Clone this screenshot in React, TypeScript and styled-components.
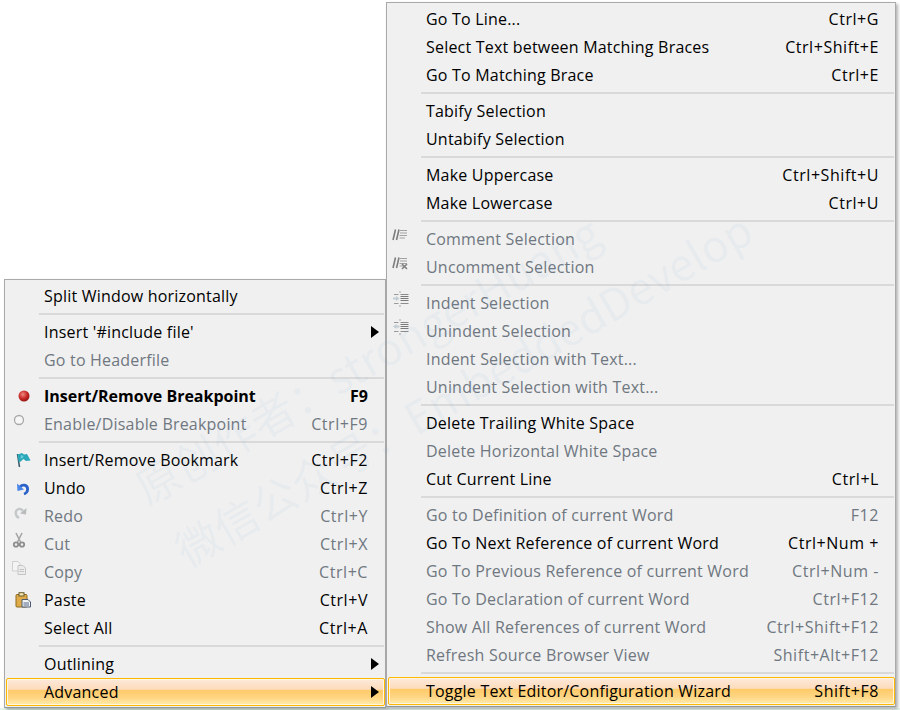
import { ReactNode } from "react";
import styled, { createGlobalStyle } from "styled-components";

const GlobalStyle = createGlobalStyle`
    html, body {
        margin: 0;
        padding: 0;
        background: #ffffff;
    }
`;

const Page = styled.div`
    position: relative;
    width: 900px;
    height: 710px;
    overflow: hidden;
    display: flex;
    align-items: flex-end;
    padding: 0 4px 2px 4px;
    box-sizing: border-box;
    background: linear-gradient(to top, #e6f4ec 2px, #ffffff 2px);
    font-family: "Open Sans", "Noto Sans", sans-serif;
    font-size: 16px;
    letter-spacing: 0.2px;
    color: #000000;
`;

const Menu = styled.div<{ $width: number; $lift?: number }>`
    width: ${p => p.$width}px;
    margin-bottom: ${p => p.$lift ?? 0}px;
    box-sizing: border-box;
    background: #f0f0f0;
    border: 1px solid #a9a9a9;
    border-bottom-color: #8f9a94;
    box-shadow: 2px 2px 3px rgba(0, 0, 0, 0.3);
    padding: 2px 0 1px 1px;
    display: flex;
    flex-direction: column;
`;

const Row = styled.div<{ $disabled?: boolean; $active?: boolean; $bold?: boolean; $tail: number }>`
    height: 28px;
    box-sizing: border-box;
    display: grid;
    grid-template-columns: 38px 1fr auto ${p => p.$tail}px;
    align-items: center;
    color: ${p => (p.$disabled ? "#6f7780" : "#000000")};
    font-weight: ${p => (p.$bold ? 700 : 400)};
    letter-spacing: ${p => (p.$bold ? "0" : "0.2px")};
    border-radius: 2px;
    ${p => p.$active && `
        border: 1px solid #ffb700;
        box-shadow: inset 0 0 0 1px #fff6e2;
        background: linear-gradient(#fde9da 0%, #fddcbc 40%, #ffca68 42%, #ffd583 72%, #ffecae 100%);
        grid-template-columns: 37px 1fr auto ${p.$tail - 1}px;
    `}
`;

const IconSlot = styled.div<{ $lift?: number; $left: number }>`
    display: flex;
    align-items: center;
    padding-left: ${p => p.$left}px;
    padding-bottom: ${p => p.$lift ?? 0}px;
`;

const Label = styled.span`
    white-space: nowrap;
`;

const Shortcut = styled.span<{ $bold?: boolean }>`
    white-space: nowrap;
    text-align: right;
    letter-spacing: ${p => (p.$bold ? "0" : "0.55px")};
`;

const Arrow = styled.div<{ $active?: boolean }>`
    width: 0;
    height: 0;
    border-left: 8px solid #000000;
    border-top: 6.5px solid transparent;
    border-bottom: 6.5px solid transparent;
    justify-self: end;
    margin-right: ${p => (p.$active ? 5 : 6)}px;
`;

const Separator = styled.div`
    height: 2px;
    margin: 3px 1px 3px 33px;
    background: #d9d9d9;
`;

const Watermark = styled.div<{ $x: number; $y: number }>`
    position: absolute;
    left: ${p => p.$x}px;
    top: ${p => p.$y}px;
    font-family: "Noto Sans CJK SC", "Open Sans", sans-serif;
    font-size: 44px;
    letter-spacing: 0;
    color: rgba(110, 160, 215, 0.07);
    white-space: nowrap;
    transform: rotate(-30deg);
    transform-origin: 0 50%;
    pointer-events: none;
`;

const BreakpointIcon = () => (
    <svg width="14" height="14" viewBox="0 0 14 14">
        <defs>
            <radialGradient id="bp" cx="40%" cy="35%" r="70%">
                <stop offset="0%" stopColor="#ee8a80" />
                <stop offset="55%" stopColor="#c92a26" />
                <stop offset="100%" stopColor="#8e1512" />
            </radialGradient>
        </defs>
        <circle cx="7" cy="7" r="5.5" fill="url(#bp)" />
    </svg>
);

const EmptyBreakpointIcon = () => (
    <svg width="14" height="14" viewBox="0 0 14 14">
        <circle cx="7" cy="7" r="4.5" fill="#f6f6f6" stroke="#a8a8a8" strokeWidth="1.3" />
    </svg>
);

const BookmarkIcon = () => (
    <svg width="16" height="16" viewBox="0 0 16 16">
        <path d="M2.5 2 L4.5 15" stroke="#3b5f6e" strokeWidth="1.6" fill="none" />
        <path d="M2.5 2.5 L7 1 L9 2.5 L12 2 L15.5 8.5 L11 9 L8.5 7 L5 10 L3.5 9 Z" fill="#2aa7b8" />
        <path d="M6 3 L8.5 4 L8 6 L5.5 6.5 Z" fill="#66cdd8" />
    </svg>
);

const UndoIcon = () => (
    <svg width="16" height="16" viewBox="0 0 16 16">
        <path d="M9 14 C13.5 12.5 14 6.5 9.5 5.2 C7.5 4.8 6 5.8 5 7" stroke="#2a62c9" strokeWidth="2.8" fill="none" />
        <path d="M2 3.5 L2.5 11 L9 9.5 Z" fill="#4a86e8" />
    </svg>
);

const RedoIcon = () => (
    <svg width="16" height="16" viewBox="0 0 16 16">
        <path d="M7 14 C3 12 2.5 6.5 6.5 5 C8.5 4.5 10 5.5 11 7" stroke="#c4c8c8" strokeWidth="2.4" fill="none" />
        <path d="M14.5 4 L14 10.5 L8 9.5 Z" fill="#b8bcbc" />
    </svg>
);

const CutIcon = () => (
    <svg width="16" height="16" viewBox="0 0 16 16">
        <path d="M5 1 L9.5 10 M11 1 L6.5 10" stroke="#a5a5a5" strokeWidth="1.6" fill="none" />
        <circle cx="5" cy="12.5" r="2.2" fill="none" stroke="#8d8d8d" strokeWidth="1.8" />
        <circle cx="11" cy="12.5" r="2.2" fill="none" stroke="#8d8d8d" strokeWidth="1.8" />
    </svg>
);

const CopyIcon = () => (
    <svg width="16" height="16" viewBox="0 0 16 16">
        <path d="M1.5 1.5 H7 L9 3.5 V11 H1.5 Z" fill="#f4f4f4" stroke="#cfcfcf" />
        <path d="M7 5.5 H12 L14.5 8 V14.5 H7 Z" fill="#ececec" stroke="#c4c4c4" />
        <path d="M8.5 9.5 H13 M8.5 11.5 H13" stroke="#c4c4c4" />
    </svg>
);

const PasteIcon = () => (
    <svg width="17" height="16" viewBox="0 0 17 16">
        <rect x="1" y="2.5" width="11" height="12.5" rx="1" fill="#e0ac4a" stroke="#8e6a22" />
        <rect x="4" y="0.7" width="5" height="3.3" fill="#f4e7b5" stroke="#6a5a2a" />
        <path d="M7 7.5 H13 L15.5 10 V15 H7 Z" fill="#f2f2f2" stroke="#4a5a72" />
        <path d="M8.5 11 H14 M8.5 13 H14" stroke="#536a8c" />
    </svg>
);

const CommentIcon = ({ cross }: { cross?: boolean }) => (
    <svg width="16" height="14" viewBox="0 0 16 14">
        <path d="M3.5 1.5 L1 12 M7 1.5 L4.5 12" stroke="#7d7d7d" strokeWidth="1.6" fill="none" />
        <path d="M8 2.5 H15 M8 5 H15 M7.5 7.5 H15 M7.5 10 H13" stroke="#a2a2a2" />
        {cross && <path d="M10 8 L15 13 M15 8 L10 13" stroke="#808080" strokeWidth="1.6" />}
    </svg>
);

const IndentIcon = ({ back }: { back?: boolean }) => (
    <svg width="17" height="18" viewBox="0 0 17 18">
        <path d="M8 1 V3 M8 15 V17" stroke="#a8a8a8" />
        <path d="M2 4.5 H6.5 M2 13.5 H6.5" stroke="#9a9a9a" />
        <path d="M8.5 4.5 H16.5 M8.5 13.5 H16.5" stroke="#8c8c8c" />
        <path d="M8.5 6.5 H16.5 M8.5 8.5 H16.5 M8.5 10.5 H16.5" stroke="#7a7a7a" strokeWidth="1.2" />
        {back ? (
            <path d="M1 8.5 L4.5 6 V7.5 H7.5 V9.5 H4.5 V11 Z" fill="#c2ccd2" />
        ) : (
            <path d="M7.5 8.5 L4 6 V7.5 H1 V9.5 H4 V11 Z" fill="#c2ccd2" />
        )}
    </svg>
);

interface Item {
    label?: string;
    shortcut?: string;
    disabled?: boolean;
    bold?: boolean;
    active?: boolean;
    submenu?: boolean;
    icon?: ReactNode;
    iconLeft?: number;
    lift?: number;
}

const LEFT_ITEMS: Item[] = [
    { label: "Split Window horizontally" },
    {},
    { label: "Insert '#include file'", submenu: true },
    { label: "Go to Headerfile", disabled: true },
    {},
    { label: "Insert/Remove Breakpoint", shortcut: "F9", bold: true, icon: <BreakpointIcon />, iconLeft: 11 },
    { label: "Enable/Disable Breakpoint", shortcut: "Ctrl+F9", disabled: true, icon: <EmptyBreakpointIcon />, iconLeft: 6, lift: 8 },
    {},
    { label: "Insert/Remove Bookmark", shortcut: "Ctrl+F2", icon: <BookmarkIcon />, iconLeft: 9 },
    { label: "Undo", shortcut: "Ctrl+Z", icon: <UndoIcon />, iconLeft: 9 },
    { label: "Redo", shortcut: "Ctrl+Y", disabled: true, icon: <RedoIcon />, iconLeft: 6, lift: 8 },
    { label: "Cut", shortcut: "Ctrl+X", disabled: true, icon: <CutIcon />, iconLeft: 5, lift: 8 },
    { label: "Copy", shortcut: "Ctrl+C", disabled: true, icon: <CopyIcon />, iconLeft: 5, lift: 8 },
    { label: "Paste", shortcut: "Ctrl+V", icon: <PasteIcon />, iconLeft: 9 },
    { label: "Select All", shortcut: "Ctrl+A" },
    {},
    { label: "Outlining", submenu: true },
    { label: "Advanced", submenu: true, active: true },
];

const RIGHT_ITEMS: Item[] = [
    { label: "Go To Line...", shortcut: "Ctrl+G" },
    { label: "Select Text between Matching Braces", shortcut: "Ctrl+Shift+E" },
    { label: "Go To Matching Brace", shortcut: "Ctrl+E" },
    {},
    { label: "Tabify Selection" },
    { label: "Untabify Selection" },
    {},
    { label: "Make Uppercase", shortcut: "Ctrl+Shift+U" },
    { label: "Make Lowercase", shortcut: "Ctrl+U" },
    {},
    { label: "Comment Selection", disabled: true, icon: <CommentIcon />, iconLeft: 4, lift: 8 },
    { label: "Uncomment Selection", disabled: true, icon: <CommentIcon cross />, iconLeft: 4, lift: 8 },
    {},
    { label: "Indent Selection", disabled: true, icon: <IndentIcon />, iconLeft: 4, lift: 8 },
    { label: "Unindent Selection", disabled: true, icon: <IndentIcon back />, iconLeft: 4, lift: 8 },
    { label: "Indent Selection with Text...", disabled: true },
    { label: "Unindent Selection with Text...", disabled: true },
    {},
    { label: "Delete Trailing White Space" },
    { label: "Delete Horizontal White Space", disabled: true },
    { label: "Cut Current Line", shortcut: "Ctrl+L" },
    {},
    { label: "Go to Definition of current Word", shortcut: "F12", disabled: true },
    { label: "Go To Next Reference of current Word", shortcut: "Ctrl+Num +" },
    { label: "Go To Previous Reference of current Word", shortcut: "Ctrl+Num -", disabled: true },
    { label: "Go To Declaration of current Word", shortcut: "Ctrl+F12", disabled: true },
    { label: "Show All References of current Word", shortcut: "Ctrl+Shift+F12", disabled: true },
    { label: "Refresh Source Browser View", shortcut: "Shift+Alt+F12", disabled: true },
    {},
    { label: "Toggle Text Editor/Configuration Wizard", shortcut: "Shift+F8", active: true },
];

function MenuList({ items, width, tail, lift }: { items: Item[]; width: number; tail: number; lift?: number }) {
    return (
        <Menu $width={width} $lift={lift}>
            {items.map((item, i) =>
                item.label ? (
                    <Row key={i} $disabled={item.disabled} $bold={item.bold} $active={item.active} $tail={tail}>
                        <IconSlot $left={item.iconLeft ?? 0} $lift={item.lift}>{item.icon}</IconSlot>
                        <Label>{item.label}</Label>
                        <Shortcut $bold={item.bold}>{item.shortcut}</Shortcut>
                        {item.submenu ? <Arrow $active={item.active} /> : <span />}
                    </Row>
                ) : (
                    <Separator key={i} />
                )
            )}
        </Menu>
    );
}

export default function App() {
    return (
        <>
            <GlobalStyle />
            <Page>
                <MenuList items={LEFT_ITEMS} width={382} tail={17} />
                <MenuList items={RIGHT_ITEMS} width={510} tail={16} lift={1} />
                <Watermark $x={138} $y={458}>原创作者：strongerHuang</Watermark>
                <Watermark $x={178} $y={520}>微信公众号：EmbeddedDevelop</Watermark>
            </Page>
        </>
    );
}
